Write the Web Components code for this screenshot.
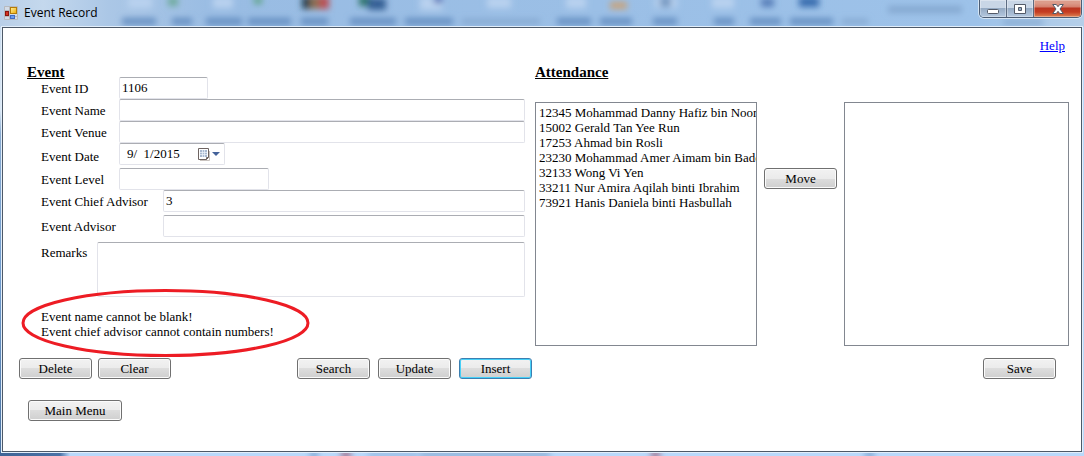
<!DOCTYPE html>
<html lang="en">
<head>
<meta charset="utf-8">
<title>Event Record</title>
<style>
body { margin: 0; font: 13px/15px "Liberation Serif", "Times New Roman", serif; color: #000; background: #b9d9fb; }
</style>
</head>
<body>
<event-record-app></event-record-app>

<template id="t-window">
<style>
:host { display: flex; flex-direction: column; box-sizing: border-box; min-height: 100vh; padding: 0 2px 4px; position: relative; z-index: 0;
  background:
    linear-gradient(90deg, #3e6496 0, #4a72a6 60px, #b9d9fb 70px) bottom / 100% 4px no-repeat,
    linear-gradient(180deg, #c3d7ec 0, #dbe8f5 110px, #88aad0 134px, #6f9bcd 280px, #48709f 100%) left / 2px 100% no-repeat,
    #b9d9fb; }
.backdrop { position: absolute; inset: 0 0 auto 0; width: 100%; height: 27px; z-index: -1; }
.foot { position: absolute; inset: auto 0 0 0; width: 100%; height: 4px; z-index: -1; }
header { display: flex; align-items: flex-start; justify-content: space-between; height: 27px; }
h1 { display: flex; align-items: center; gap: 6px; margin: 0; padding: 5px 0 0 2px; font: 12px/16px "Open Sans", "Segoe UI", sans-serif; }
.controls { display: flex; height: 17px; border: 1px solid #4c5d74; border-top: 0; border-radius: 0 0 5px 5px; overflow: hidden; box-shadow: 0 0 0 1px #d5e5f5; }
.controls button { display: grid; place-items: center; width: 27px; padding: 0; border: 0; border-right: 1px solid #5d6c82; background: linear-gradient(#c9d6e6 0 8px, #94a9c2 8px, #b4c8df); box-shadow: inset 0 0 0 1px #ffffff55; }
.controls .close { width: 47px; border: 0; background: linear-gradient(#dc9c8b 0 3px, #d4806e 7px, #b93622 8px, #c53d22 12px, #dd8455); }
main { flex: 1; border: 1px solid #4d5968; background: #fff; box-shadow: 0 0 0 1px #e2eefa; }
</style>
<svg class="backdrop" viewBox="0 0 1084 27" preserveAspectRatio="none" aria-hidden="true">
  <defs>
    <linearGradient id="sky"><stop offset="0" stop-color="#b9cfe8"/><stop offset=".04" stop-color="#c4d8ed"/><stop offset=".1" stop-color="#abc7e6"/><stop offset=".2" stop-color="#99bce3"/><stop offset=".9" stop-color="#9dc2e9"/><stop offset="1" stop-color="#b5cfe9"/></linearGradient>
    <filter id="soft" x="-10%" y="-60%" width="120%" height="220%"><feGaussianBlur stdDeviation="3"/></filter>
  </defs>
  <rect width="1084" height="27" fill="url(#sky)"/>
  <g filter="url(#soft)">
    <g fill="#6690c2">
      <rect x="122" y="18" width="34" height="7"/><rect x="172" y="18" width="20" height="7"/><rect x="206" y="18" width="36" height="7"/><rect x="248" y="18" width="43" height="7"/><rect x="301" y="18" width="27" height="7"/><rect x="350" y="18" width="46" height="7"/><rect x="405" y="18" width="48" height="7"/>
      <rect x="557" y="18" width="34" height="7"/><rect x="600" y="18" width="32" height="7"/><rect x="653" y="18" width="24" height="7"/><rect x="714" y="18" width="20" height="7"/><rect x="750" y="18" width="31" height="7"/><rect x="790" y="18" width="43" height="7"/>
    </g>
    <g fill="#84a8d0"><rect x="462" y="19" width="78" height="5"/><rect x="842" y="19" width="26" height="5"/><rect x="888" y="6" width="74" height="7"/><rect x="1003" y="20" width="40" height="5"/></g>
    <g fill="#b9d2ef"><rect x="128" y="-3" width="24" height="11"/><rect x="213" y="-3" width="20" height="11"/><rect x="420" y="-3" width="22" height="13"/><rect x="487" y="-3" width="24" height="11"/><rect x="566" y="-3" width="20" height="11"/><rect x="655" y="-3" width="22" height="11"/><rect x="712" y="-3" width="22" height="11"/></g>
    <rect x="168" y="-3" width="10" height="9" fill="#6eaa9b"/><rect x="254" y="-3" width="8" height="7" fill="#5fa487"/>
    <rect x="302" y="-4" width="12" height="13" fill="#24404e"/><rect x="310" y="-4" width="10" height="13" fill="#8b7052"/><rect x="319" y="-4" width="10" height="13" fill="#bb5055"/>
    <rect x="359" y="-4" width="12" height="10" fill="#2d7569"/><rect x="368" y="-2" width="18" height="12" fill="#345f94"/>
    <rect x="434" y="-3" width="8" height="6" fill="#465fae"/><rect x="610" y="2" width="17" height="7" fill="#c9a278"/><rect x="660" y="-3" width="11" height="10" fill="#7799c1"/><rect x="761" y="-2" width="13" height="9" fill="#587fb9"/><rect x="799" y="-3" width="20" height="10" fill="#376daf"/>
  </g>
</svg>
<svg class="foot" viewBox="0 0 1084 4" preserveAspectRatio="none" aria-hidden="true">
  <defs><filter id="low" x="-5%" y="-50%" width="110%" height="200%"><feGaussianBlur stdDeviation="3 0"/></filter></defs>
  <g filter="url(#low)">
    <g fill="#8db2dc"><rect x="310" y="1" width="8" height="3"/><rect x="368" y="1" width="50" height="3" opacity=".5"/><rect x="865" y="1" width="9" height="3"/></g>
    <g fill="#a98ba8"><rect x="341" y="0" width="10" height="4"/><rect x="651" y="0" width="9" height="4"/></g>
    <rect x="420" y="1" width="130" height="3" fill="#9bbde2"/>
  </g>
</svg>
<header>
  <h1>
    <svg width="14" height="14" viewBox="0 0 14 14" aria-hidden="true">
      <defs><linearGradient id="y" x2="1" y2="1"><stop stop-color="#fff3a2"/><stop offset="1" stop-color="#efa800"/></linearGradient></defs>
      <path d="M.5.5h13v13H.5zM5.500.5v13M.5 4.500h5M.5 10.500h13" fill="#d3dbe6" stroke="#b7b9bd"/>
      <rect x="6.500" y="1.500" width="6" height="6" fill="url(#y)" stroke="#b47c08"/>
      <rect x="1.500" y="5.500" width="3" height="4" fill="#d43321" stroke="#8c150e"/>
      <rect x="6.500" y="9.500" width="4" height="3" fill="#6b9cf0" stroke="#426bc2"/>
    </svg>
    Event Record
  </h1>
  <div class="controls">
    <button aria-label="Minimize"><svg width="12" height="14" viewBox="0 0 12 14"><rect x=".5" y="7.500" width="11" height="4" rx="1" fill="#fff" stroke="#535a68"/></svg></button>
    <button aria-label="Maximize"><svg width="12" height="12" viewBox="0 0 12 12"><path d="M.5 1.500h11v9H.5zM4.500 4.500v3h3v-3z" fill="#fff" fill-rule="evenodd" stroke="#535a68"/></svg></button>
    <button class="close" aria-label="Close"><svg width="12" height="12" viewBox="0 0 12 12"><path d="M.7 1.500h3.600L6 3.700l1.700-2.200h3.600L8 6l3.300 4.500H7.700L6 8.300 4.300 10.500H.7L4 6z" fill="#fff" stroke="#535a68"/></svg></button>
  </div>
</header>
<main><slot></slot></main>
</template>

<template id="t-button">
<style>
:host { display: block; width: 73px; }
:host([wide]) { width: 94px; }
button { display: block; width: 100%; height: 21px; padding: 0; border: 1px solid #707070; border-radius: 3px; font: inherit; color: inherit;
  background: linear-gradient(#f2f2f2, #ebebeb 50%, #dddddd 50%, #cfcfcf); box-shadow: inset 0 0 0 1px #fbfbfb; }
:host([default]) button { border-color: #3c7fb1; box-shadow: inset 0 0 0 1px #46d0f8; }
</style>
<button type="button"><slot></slot></button>
</template>

<template id="t-field">
<style>
:host { display: flex; align-items: center; }
label { flex: none; box-sizing: border-box; width: var(--label, 78px); }
:host([long]) { --label: 122px; }
:host([area]) { --label: 56px; align-items: flex-start; }
:host([area]) label { padding-top: 3px; }
input, textarea { display: block; box-sizing: border-box; flex: 1; min-width: 0; height: 22px; margin: 0; padding: 0 2px; border: 1px solid #e2e3ea; border-top-color: #abadb3; border-radius: 2px; font: inherit; color: inherit; background: #fff; outline: 0; resize: none; }
textarea { height: 55px; }
:host([size="id"]) input { flex: 0 1 89px; }
:host([size="level"]) input { flex: 0 1 150px; }
</style>
</template>

<template id="t-date">
<style>
:host { display: flex; align-items: center; }
label { flex: none; width: 78px; padding-top: 4px; }
.box { display: flex; align-items: center; box-sizing: border-box; width: 106px; height: 22px; border: 1px solid #e2e3ea; border-top-color: #abadb3; border-radius: 2px; background: #fff; }
input { flex: 1; min-width: 0; height: 18px; padding: 0 0 0 7px; border: 0; font: inherit; color: inherit; background: none; outline: 0; }
button { padding: 0 4px 0 0; border: 0; background: none; line-height: 0; }
</style>
<label for="d">Event Date</label>
<div class="box">
  <input id="d" type="text" value="9/  1/2015">
  <button type="button" aria-label="Open calendar"><svg width="22" height="13" viewBox="0 0 22 13">
    <path d="M2 12.500h9.500V3" fill="none" stroke="#c9c3bf"/>
    <path d="M.5.5h10v9l-2 2h-8z" fill="#fff" stroke="#6e6462"/>
    <path d="M2 2h7v7H2z" fill="#a9b9d0"/><path d="M4.500 2v7M6.500 2v7M2 4.500h7M2 6.500h7" stroke="#eef3fa" stroke-width=".7"/>
    <path d="M8.500 11.500v-2h2" fill="none" stroke="#6e6462"/>
    <path d="M14 4h8l-4 4z" fill="#44629a"/></svg></button>
</div>
</template>

<template id="t-list">
<style>
:host { display: block; min-width: 0; }
select { display: block; box-sizing: border-box; width: 100%; height: 244px; margin: 0; padding: 2px 1px; border: 1px solid #828790; border-radius: 0; background: #fff; font: inherit; color: inherit; overflow: hidden; outline: 0; }
option { box-sizing: border-box; height: 15px; min-height: 0; padding: 0 2px; font: inherit; line-height: 15px; }
</style>
<select multiple size="16"></select>
</template>

<template id="t-messages">
<style>
:host { display: block; position: relative; width: fit-content; }
p { margin: 0; white-space: nowrap; }
svg { position: absolute; left: -20px; top: -21px; pointer-events: none; }
</style>
<div role="alert"><slot></slot></div>
<svg width="289" height="70" viewBox="0 0 289 70" aria-hidden="true"><ellipse cx="144.500" cy="35" rx="142.500" ry="32.500" fill="none" stroke="#ed1c24" stroke-width="3"/></svg>
</template>

<template id="t-app">
<style>
:host { display: block; }
p { margin: 0; }
.help { text-align: right; padding: 10px 16px 14px 0; }
a { color: #00f; }
.cols { display: grid; grid-template-columns: 516fr 534fr; padding: 0 12px 0 16px; }
h2 { margin: 0; font-size: 15px; line-height: 10px; text-decoration: underline; }
.event h2 { padding-left: 8px; }
.fields { display: flex; flex-direction: column; gap: 3px; padding: 0 10px 0 22px; }
.fields record-field[area] { margin-top: 2px; }
validation-messages { margin: 12px 0 0 22px; }
.bar { display: flex; gap: 8px; padding-top: 18px; }
.bar .left { display: flex; flex: 1; gap: 6px; }
.event .bar { padding: 19px 3px 0 0; }
.menu { padding: 21px 0 30px 9px; }
.pick { display: grid; grid-template-columns: 222fr 73px 225fr; gap: 7px; padding-top: 25px; }
.pick push-button { padding-top: 66px; }
.attendance .bar { justify-content: flex-end; padding: 12px 13px 0 0; }
</style>
<aero-window>
  <p class="help"><a href="#help">Help</a></p>
  <div class="cols">
    <section class="event">
      <h2>Event</h2>
      <div class="fields">
        <div>
          <record-field label="Event ID" value="1106" size="id"></record-field>
          <record-field label="Event Name"></record-field>
          <record-field label="Event Venue"></record-field>
          <date-field></date-field>
        </div>
        <div>
          <record-field label="Event Level" size="level"></record-field>
          <record-field label="Event Chief Advisor" value="3" long></record-field>
        </div>
        <record-field label="Event Advisor" long></record-field>
        <record-field label="Remarks" area></record-field>
      </div>
      <validation-messages><p>Event name cannot be blank!</p><p>Event chief advisor cannot contain numbers!</p></validation-messages>
      <div class="bar">
        <div class="left"><push-button>Delete</push-button><push-button>Clear</push-button></div>
        <push-button>Search</push-button><push-button>Update</push-button><push-button default>Insert</push-button>
      </div>
      <div class="menu"><push-button wide>Main Menu</push-button></div>
    </section>
    <section class="attendance">
      <h2>Attendance</h2>
      <div class="pick">
        <list-box label="Students" items="12345 Mohammad Danny Hafiz bin Noor|15002 Gerald Tan Yee Run|17253 Ahmad bin Rosli|23230 Mohammad Amer Aimam bin Bade|32133 Wong Vi Yen|33211 Nur Amira Aqilah binti Ibrahim|73921 Hanis Daniela binti Hasbullah"></list-box>
        <push-button>Move</push-button>
        <list-box label="Attending"></list-box>
      </div>
      <div class="bar"><push-button>Save</push-button></div>
    </section>
  </div>
</aero-window>
</template>

<script>
class Base extends HTMLElement {
  constructor() {
    super();
    this.attachShadow({ mode: 'open' }).append(document.getElementById(this.constructor.tpl).content.cloneNode(true));
  }
}
const define = (name, tpl, cls = class extends Base {}) => { cls.tpl = tpl; customElements.define(name, cls); };

define('aero-window', 't-window');
define('push-button', 't-button');
define('date-field', 't-date');
define('validation-messages', 't-messages');
define('record-field', 't-field', class extends Base {
  connectedCallback() {
    if (this.shadowRoot.querySelector('label')) return;
    const label = document.createElement('label');
    label.htmlFor = 'f';
    label.textContent = this.getAttribute('label');
    const box = document.createElement(this.hasAttribute('area') ? 'textarea' : 'input');
    box.id = 'f';
    box.value = this.getAttribute('value') || '';
    this.shadowRoot.append(label, box);
  }
});
define('list-box', 't-list', class extends Base {
  connectedCallback() {
    const list = this.shadowRoot.querySelector('select');
    list.setAttribute('aria-label', this.getAttribute('label'));
    const items = this.getAttribute('items');
    list.replaceChildren(...(items ? items.split('|') : []).map(text => new Option(text)));
  }
});
define('event-record-app', 't-app');
</script>
</body>
</html>
